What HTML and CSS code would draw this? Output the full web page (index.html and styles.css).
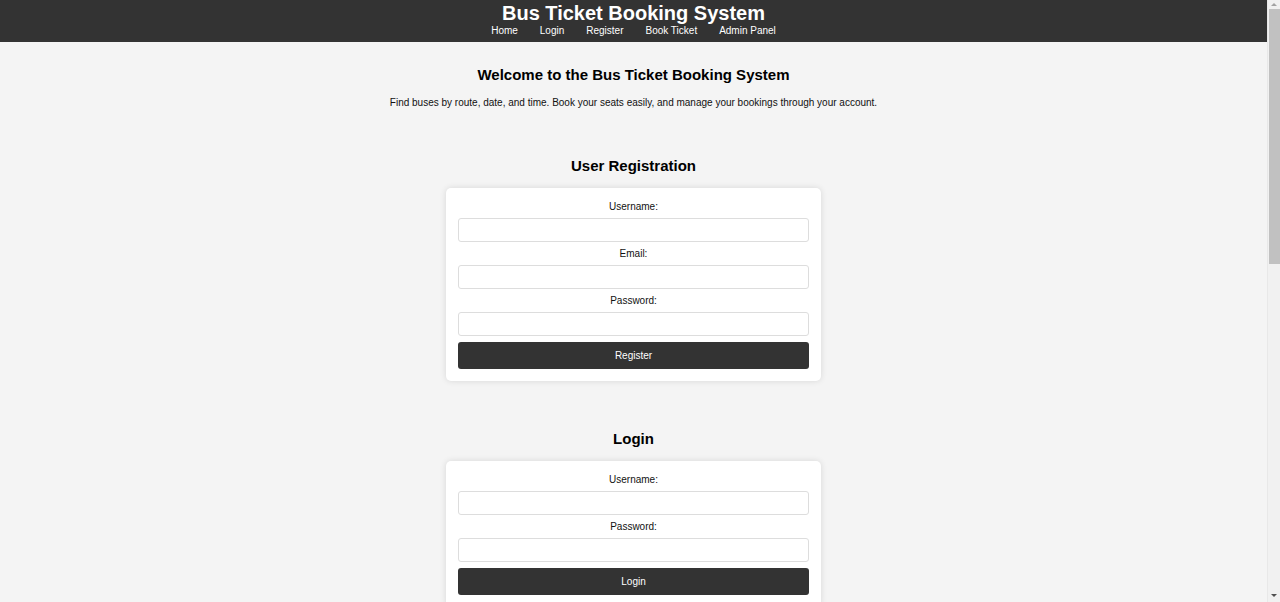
FILE: index.html
```html
<!DOCTYPE html>
<html lang="en">
<head>
<meta charset="utf-8">
<title>Bus Ticket Booking System</title>
<link rel="stylesheet" href="styles.css">
</head>
<body>
<div class="page">
  <header class="site-header">
    <h1 class="site-title">Bus Ticket Booking System</h1>
    <nav class="site-nav">
      <a href="#">Home</a>
      <a href="#">Login</a>
      <a href="#">Register</a>
      <a href="#">Book Ticket</a>
      <a href="#">Admin Panel</a>
    </nav>
  </header>
  <main class="content">
    <section class="intro">
      <h2 class="section-title">Welcome to the Bus Ticket Booking System</h2>
      <p class="intro-text">Find buses by route, date, and time. Book your seats easily, and manage your bookings through your account.</p>
    </section>

    <section class="form-section">
      <h2 class="section-title">User Registration</h2>
      <form class="card">
        <label class="field-label">Username:</label>
        <input class="field-input" type="text">
        <label class="field-label">Email:</label>
        <input class="field-input" type="email">
        <label class="field-label">Password:</label>
        <input class="field-input" type="password">
        <button class="btn" type="button">Register</button>
      </form>
    </section>

    <section class="form-section form-section-next">
      <h2 class="section-title">Login</h2>
      <form class="card">
        <label class="field-label">Username:</label>
        <input class="field-input" type="text">
        <label class="field-label">Password:</label>
        <input class="field-input" type="password">
        <button class="btn" type="button">Login</button>
      </form>
    </section>
  </main>
</div>
<div class="scrollbar" aria-hidden="true">
  <span class="scroll-arrow scroll-up"></span>
  <span class="scroll-thumb"></span>
  <span class="scroll-arrow scroll-down"></span>
</div>
</body>
</html>
```
FILE: styles.css
```css
html {
  background: #f4f4f4;
}
::-webkit-scrollbar {
  width: 0;
  height: 0;
}
body {
  margin: 0;
  font-family: "Liberation Sans", Arial, sans-serif;
  color: #111;
  background: #f4f4f4;
}
.page {
  margin-right: 13px;
}
.site-header {
  background: #333;
  color: #fff;
  text-align: center;
  padding: 2px 0 5px;
}
.site-title {
  margin: 0;
  font-size: 20px;
  line-height: 23px;
  font-weight: bold;
}
.site-nav {
  font-size: 10px;
  line-height: 12px;
}
.site-nav a {
  color: #fff;
  text-decoration: none;
  margin: 0 9.6px;
}
.content {
  display: flex;
  flex-direction: column;
  align-items: center;
  padding: 24px 0 40px;
}
.intro {
  text-align: center;
}
.section-title {
  margin: 0;
  font-size: 15px;
  line-height: 17px;
  font-weight: bold;
  color: #000;
  text-align: center;
}
.intro-text {
  margin: 14px 0 0;
  font-size: 10px;
  line-height: 12px;
  color: #111;
}
.form-section {
  margin-top: 48px;
  display: flex;
  flex-direction: column;
  align-items: center;
}
.form-section-next {
  margin-top: 49px;
}
.card {
  margin-top: 14px;
  width: 351px;
  padding: 13px 12px 12px;
  background: #fff;
  border-radius: 5px;
  box-shadow: 0 0 6px rgba(0, 0, 0, 0.12);
  display: flex;
  flex-direction: column;
  align-items: stretch;
}
.field-label {
  font-size: 10px;
  line-height: 12px;
  text-align: center;
  color: #111;
}
.field-input {
  box-sizing: border-box;
  height: 24px;
  margin: 5px 0 6px;
  border: 1px solid #ddd;
  border-radius: 3px;
  background: #fff;
  font: inherit;
}
.btn {
  height: 27px;
  margin-top: 0;
  border: none;
  border-radius: 3px;
  background: #333;
  color: #fff;
  font-family: "Liberation Sans", Arial, sans-serif;
  font-size: 10px;
}

/* drawn scrollbar overlay on the right edge */
.scrollbar {
  position: fixed;
  top: 0;
  right: 0;
  width: 13px;
  height: 100vh;
  background: #f1f1f1;
  border-left: 1px solid #e8e8e8;
  box-sizing: border-box;
  display: flex;
  flex-direction: column;
  align-items: center;
}
.scroll-arrow {
  width: 0;
  height: 0;
  border-left: 3px solid transparent;
  border-right: 3px solid transparent;
}
.scroll-up {
  margin-top: 3px;
  border-bottom: 3px solid #a3a3a3;
}
.scroll-thumb {
  margin-top: 3px;
  width: 11px;
  height: 255px;
  background: #c1c1c1;
}
.scroll-down {
  margin-top: auto;
  margin-bottom: 5px;
  border-top: 3px solid #505050;
}
```
